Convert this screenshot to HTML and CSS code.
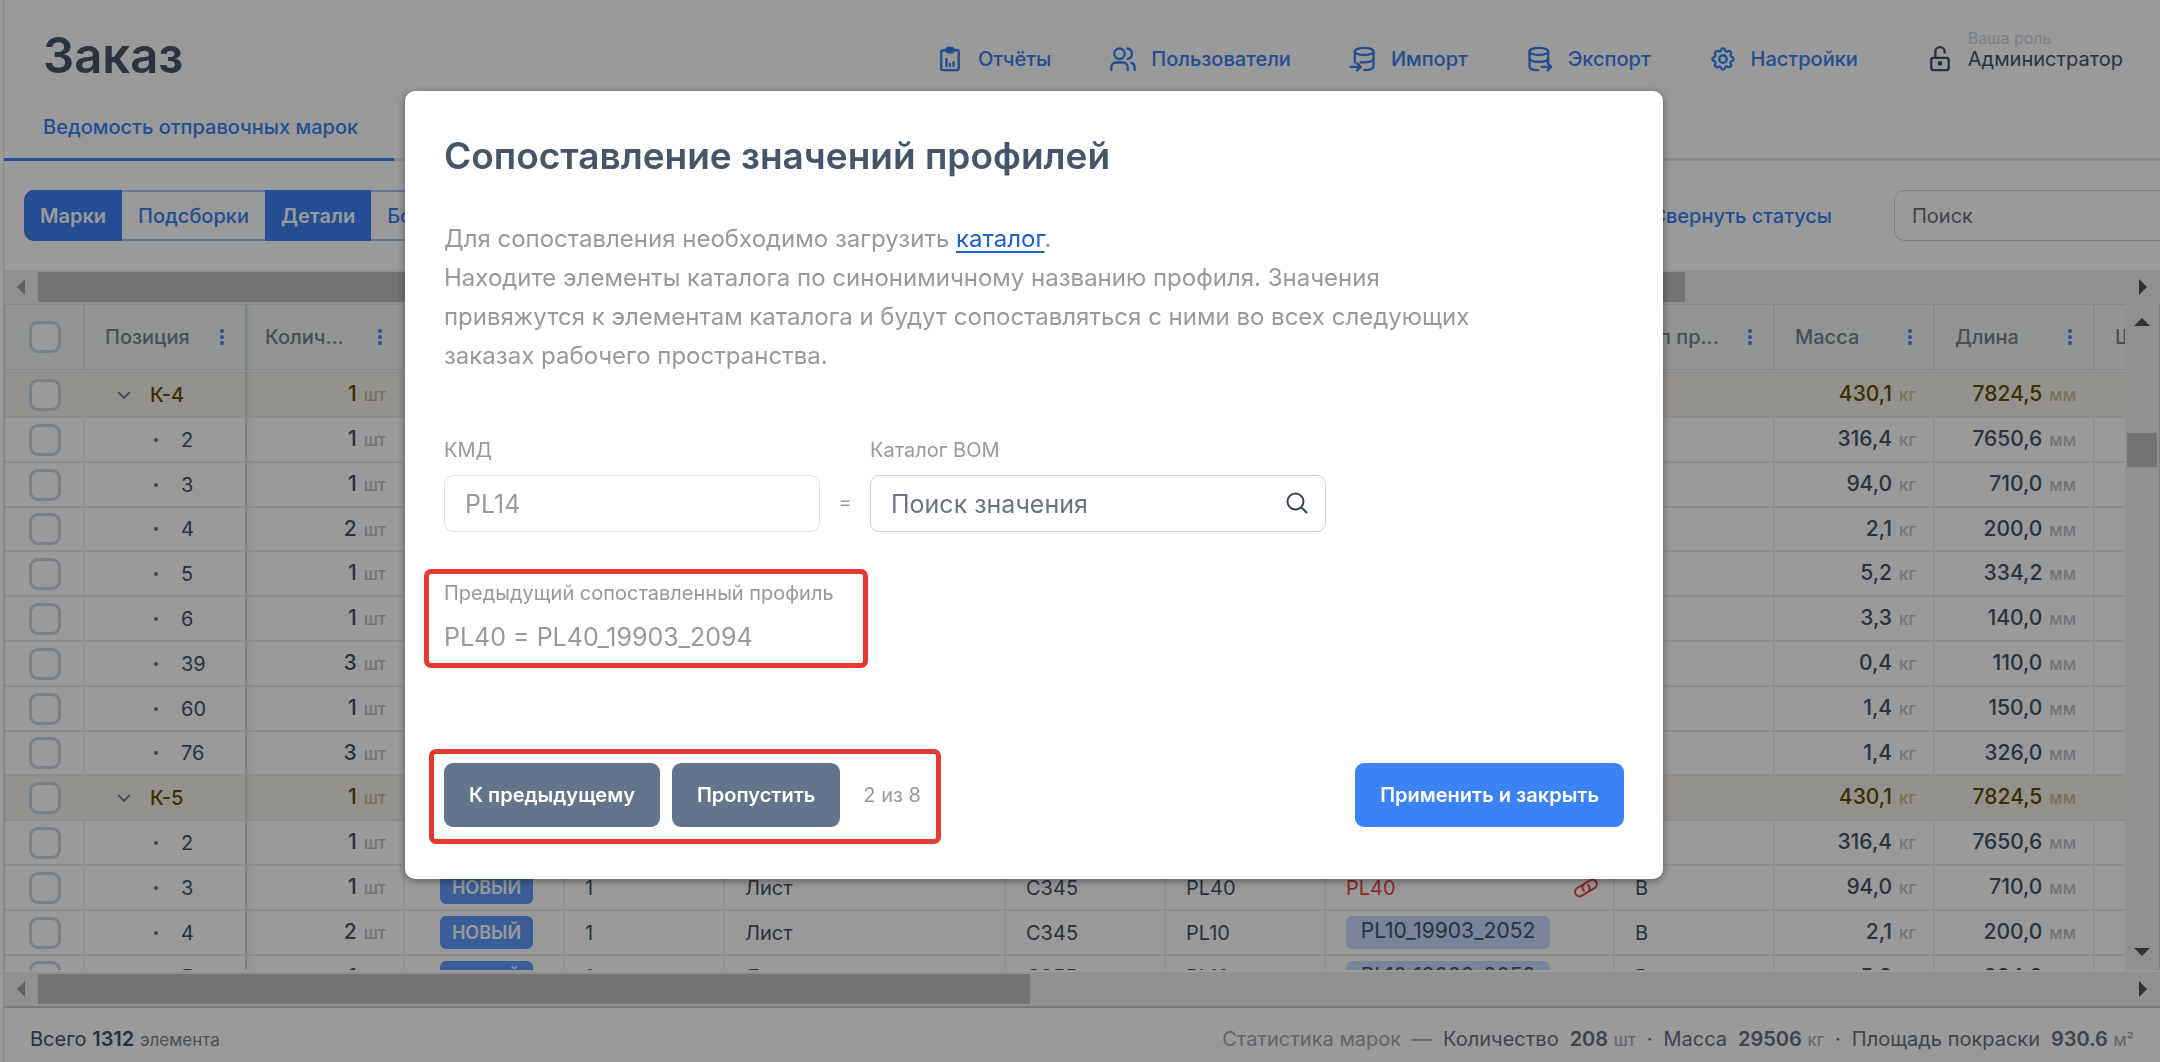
FILE: index.html
```html
<!DOCTYPE html>
<html lang="ru">
<head>
<meta charset="utf-8">
<title>Заказ</title>
<link rel="stylesheet" href="styles.css">
</head>
<body>
<svg class="sprite" aria-hidden="true">
  <symbol id="i-report" viewBox="0 0 24 24"><rect x="4.5" y="4.5" width="15" height="17" rx="1.5"/><path d="M9 4.5v-.4C9 3 9.800 2.600 10.600 2.600h2.800c.8 0 1.600.5 1.600 1.500v.6c0 1-.8 1.500-1.600 1.500h-2.800C9.800 6.200 9 5.700 9 4.700zM9 18v-6M12 18v-1.500M15 18v-3.200"/></symbol>
  <symbol id="i-users" viewBox="0 0 24 24"><circle cx="9" cy="7.500" r="4.500"/><path d="M2 21.500v-2.500a4 4 0 0 1 4-4h6a4 4 0 0 1 4 4v2.500M16 3a4.600 4.600 0 0 1 0 9M19 15.300a3.800 3.800 0 0 1 3 3.700v2.500"/></symbol>
  <symbol id="i-import" viewBox="0 0 24 24"><ellipse cx="13" cy="5.500" rx="8" ry="3.100"/><path d="M5 5.500V15M21 5.500v13c0 1.800-3.300 3-8 3M21 11.500c0 2.400-4.500 3.900-11 3.300M1.500 18.800h8M7 15.800l3 3-3 3"/></symbol>
  <symbol id="i-export" viewBox="0 0 24 24"><ellipse cx="11" cy="5.500" rx="8" ry="3.100"/><path d="M3 5.500v13c0 1.700 3 3 7.500 3M19 5.500V15M3 11c0 2.300 3.600 3.600 8 3.600s8-1.300 8-3.600M13.500 18.800h8M18.500 15.800l3 3-3 3"/></symbol>
  <symbol id="i-gear" viewBox="0 0 24 24"><circle cx="12" cy="12" r="3.200"/><path d="M10.300 4.300c.4-1.800 3-1.800 3.400 0a1.700 1.700 0 0 0 2.600 1.100c1.500-.9 3.300.8 2.400 2.400a1.700 1.700 0 0 0 1 2.500c1.800.4 1.800 3 0 3.400a1.700 1.700 0 0 0-1 2.600c.9 1.500-.9 3.300-2.400 2.400a1.700 1.700 0 0 0-2.600 1c-.4 1.800-3 1.800-3.400 0a1.700 1.700 0 0 0-2.600-1c-1.500.9-3.300-.9-2.400-2.400a1.700 1.700 0 0 0-1-2.600c-1.800-.4-1.800-3 0-3.400a1.700 1.700 0 0 0 1-2.600c-.9-1.500.9-3.300 2.400-2.400 1 .6 2.300.1 2.600-1z"/></symbol>
  <symbol id="i-lock" viewBox="0 0 24 24"><rect x="4.500" y="11" width="15" height="10.500" rx="1.800"/><path d="M8 11V6a4 4 0 0 1 8-.4V6.500"/><circle cx="12" cy="15.800" r="1"/></symbol>
  <symbol id="i-search" viewBox="0 0 24 24"><circle cx="10.500" cy="10.500" r="8"/><path d="M16.500 16.500l5 5"/></symbol>
  <symbol id="i-link" viewBox="0 0 24 24"><path transform="rotate(14 12 12)" d="M13.190 8.688a4.500 4.500 0 0 1 1.242 7.244l-4.500 4.500a4.500 4.500 0 0 1-6.364-6.364l4.400-4.400m8.050 4.700 4.400-4.400a4.500 4.500 0 0 0-6.364-6.364l-4.500 4.500a4.500 4.500 0 0 0 1.242 7.244"/></symbol>
  <symbol id="i-chevron" viewBox="0 0 24 24"><path d="M3 8l9 9 9-9"/></symbol>
  <symbol id="i-dots" viewBox="0 0 4 16"><circle cx="2" cy="2" r="2"/><circle cx="2" cy="8" r="2"/><circle cx="2" cy="14" r="2"/></symbol>
</svg>

<div class="page">
  <header class="header">
    <h1 class="header-title">Заказ</h1>
    <nav class="nav">
      <a class="nav-item" href="#"><svg class="icon"><use href="#i-report"/></svg>Отчёты</a>
      <a class="nav-item" href="#"><svg class="icon"><use href="#i-users"/></svg>Пользователи</a>
      <a class="nav-item" href="#"><svg class="icon"><use href="#i-import"/></svg>Импорт</a>
      <a class="nav-item" href="#"><svg class="icon"><use href="#i-export"/></svg>Экспорт</a>
      <a class="nav-item" href="#"><svg class="icon"><use href="#i-gear"/></svg>Настройки</a>
      <div class="nav-item role"><svg class="icon"><use href="#i-lock"/></svg><div class="role-text"><span class="role-label">Ваша роль</span><span>Администратор</span></div></div>
    </nav>
  </header>

  <nav class="tabs"><a class="tab" href="#">Ведомость отправочных марок</a></nav>

  <div class="toolbar">
    <div class="segments">
      <button class="segment segment-on" type="button">Марки</button>
      <button class="segment" type="button">Подсборки</button>
      <button class="segment segment-on" type="button">Детали</button>
      <button class="segment" type="button">Болты</button>
    </div>
    <button class="link-button" type="button">Свернуть статусы</button>
    <input class="toolbar-search" type="text" placeholder="Поиск" aria-label="Поиск">
  </div>

  <main class="grid">
    <div class="hbar">
      <span class="arrow arrow-left"></span><div class="hbar-track"><div class="thumb" style="width:78.9%"></div></div><span class="arrow arrow-right"></span>
    </div>
    <div class="grid-body">
      <div class="viewport">
        <table class="table">
          <colgroup><col class="w-check"><col class="w-pos"><col class="w-qty"><col class="w-std"><col class="w-std"><col class="w-name"><col class="w-std"><col class="w-std"><col class="w-cat"><col class="w-std"><col class="w-std"><col class="w-std"><col class="w-std"></colgroup>
          <thead>
            <tr>
              <th><input class="check" type="checkbox" aria-label="Выбрать все"></th>
              <th><div class="th">Позиция<svg class="dots"><use href="#i-dots"/></svg></div></th>
              <th><div class="th">Колич...<svg class="dots"><use href="#i-dots"/></svg></div></th>
              <th></th><th></th><th></th><th></th><th></th><th></th>
              <th><div class="th">Тип пр...<svg class="dots"><use href="#i-dots"/></svg></div></th>
              <th><div class="th">Масса<svg class="dots"><use href="#i-dots"/></svg></div></th>
              <th><div class="th">Длина<svg class="dots"><use href="#i-dots"/></svg></div></th>
              <th><div class="th">Ш</div></th>
            </tr>
          </thead>
          <tbody>
            <tr class="group"><td><input class="check" type="checkbox" aria-label="К-4"></td><td><div class="mark"><svg class="chevron"><use href="#i-chevron"/></svg>К-4</div></td><td class="num">1<small>шт</small></td><td></td><td></td><td></td><td></td><td></td><td></td><td></td><td class="num">430,1<small>кг</small></td><td class="num">7824,5<small>мм</small></td><td></td></tr>
            <tr><td><input class="check" type="checkbox" aria-label="2"></td><td><div class="part">2</div></td><td class="num">1<small>шт</small></td><td></td><td></td><td></td><td></td><td></td><td></td><td></td><td class="num">316,4<small>кг</small></td><td class="num">7650,6<small>мм</small></td><td></td></tr>
            <tr><td><input class="check" type="checkbox" aria-label="3"></td><td><div class="part">3</div></td><td class="num">1<small>шт</small></td><td></td><td></td><td></td><td></td><td></td><td></td><td></td><td class="num">94,0<small>кг</small></td><td class="num">710,0<small>мм</small></td><td></td></tr>
            <tr><td><input class="check" type="checkbox" aria-label="4"></td><td><div class="part">4</div></td><td class="num">2<small>шт</small></td><td></td><td></td><td></td><td></td><td></td><td></td><td></td><td class="num">2,1<small>кг</small></td><td class="num">200,0<small>мм</small></td><td></td></tr>
            <tr><td><input class="check" type="checkbox" aria-label="5"></td><td><div class="part">5</div></td><td class="num">1<small>шт</small></td><td></td><td></td><td></td><td></td><td></td><td></td><td></td><td class="num">5,2<small>кг</small></td><td class="num">334,2<small>мм</small></td><td></td></tr>
            <tr><td><input class="check" type="checkbox" aria-label="6"></td><td><div class="part">6</div></td><td class="num">1<small>шт</small></td><td></td><td></td><td></td><td></td><td></td><td></td><td></td><td class="num">3,3<small>кг</small></td><td class="num">140,0<small>мм</small></td><td></td></tr>
            <tr><td><input class="check" type="checkbox" aria-label="39"></td><td><div class="part">39</div></td><td class="num">3<small>шт</small></td><td></td><td></td><td></td><td></td><td></td><td></td><td></td><td class="num">0,4<small>кг</small></td><td class="num">110,0<small>мм</small></td><td></td></tr>
            <tr><td><input class="check" type="checkbox" aria-label="60"></td><td><div class="part">60</div></td><td class="num">1<small>шт</small></td><td></td><td></td><td></td><td></td><td></td><td></td><td></td><td class="num">1,4<small>кг</small></td><td class="num">150,0<small>мм</small></td><td></td></tr>
            <tr><td><input class="check" type="checkbox" aria-label="76"></td><td><div class="part">76</div></td><td class="num">3<small>шт</small></td><td></td><td></td><td></td><td></td><td></td><td></td><td></td><td class="num">1,4<small>кг</small></td><td class="num">326,0<small>мм</small></td><td></td></tr>
            <tr class="group"><td><input class="check" type="checkbox" aria-label="К-5"></td><td><div class="mark"><svg class="chevron"><use href="#i-chevron"/></svg>К-5</div></td><td class="num">1<small>шт</small></td><td></td><td></td><td></td><td></td><td></td><td></td><td></td><td class="num">430,1<small>кг</small></td><td class="num">7824,5<small>мм</small></td><td></td></tr>
            <tr><td><input class="check" type="checkbox" aria-label="2"></td><td><div class="part">2</div></td><td class="num">1<small>шт</small></td><td></td><td></td><td></td><td></td><td></td><td></td><td></td><td class="num">316,4<small>кг</small></td><td class="num">7650,6<small>мм</small></td><td></td></tr>
            <tr><td><input class="check" type="checkbox" aria-label="3"></td><td><div class="part">3</div></td><td class="num">1<small>шт</small></td><td class="status"><span class="badge">НОВЫЙ</span></td><td>1</td><td>Лист</td><td>С345</td><td>PL40</td><td><div class="missing">PL40<svg class="link-icon"><use href="#i-link"/></svg></div></td><td>B</td><td class="num">94,0<small>кг</small></td><td class="num">710,0<small>мм</small></td><td></td></tr>
            <tr><td><input class="check" type="checkbox" aria-label="4"></td><td><div class="part">4</div></td><td class="num">2<small>шт</small></td><td class="status"><span class="badge">НОВЫЙ</span></td><td>1</td><td>Лист</td><td>С345</td><td>PL10</td><td><span class="tag">PL10_19903_2052</span></td><td>B</td><td class="num">2,1<small>кг</small></td><td class="num">200,0<small>мм</small></td><td></td></tr>
            <tr><td><input class="check" type="checkbox" aria-label="5"></td><td><div class="part">5</div></td><td class="num">1<small>шт</small></td><td class="status"><span class="badge">НОВЫЙ</span></td><td>1</td><td>Лист</td><td>С355</td><td>PL10</td><td><span class="tag">PL10_19903_2052</span></td><td>B</td><td class="num">5,2<small>кг</small></td><td class="num">334,2<small>мм</small></td><td></td></tr>
          </tbody>
        </table>
      </div>
      <div class="vbar"><span class="arrow arrow-up"></span><div class="thumb thumb-side"></div><span class="arrow arrow-down"></span></div>
    </div>
    <div class="hbar">
      <span class="arrow arrow-left"></span><div class="hbar-track"><div class="thumb" style="width:47.5%"></div></div><span class="arrow arrow-right"></span>
    </div>
  </main>

  <footer class="footer">
    <div class="total">Всего <b>1312</b> <small>элемента</small></div>
    <div class="stats"><span class="stats-title">Статистика марок</span><span class="stats-title">—</span><span>Количество</span><span><b>208</b> <small>шт</small></span><span>·</span><span>Масса</span><span><b>29506</b> <small>кг</small></span><span>·</span><span>Площадь покраски</span><span><b>930.6</b> <small>м²</small></span></div>
  </footer>
</div>

<div class="overlay">
  <section class="dialog" role="dialog" aria-modal="true" aria-labelledby="dialog-title">
    <h2 class="dialog-title" id="dialog-title">Сопоставление значений профилей</h2>
    <p class="dialog-text">Для сопоставления необходимо загрузить <a href="#">каталог</a>.<br>Находите элементы каталога по синонимичному названию профиля. Значения привяжутся к элементам каталога и будут сопоставляться с ними во всех следующих заказах рабочего пространства.</p>
    <div class="match">
      <div class="field">
        <label for="kmd">КМД</label>
        <input class="input" id="kmd" type="text" value="PL14" disabled>
      </div>
      <span class="equals">=</span>
      <div class="field">
        <label for="bom">Каталог BOM</label>
        <div class="search"><input class="input" id="bom" type="text" placeholder="Поиск значения"><svg class="search-icon"><use href="#i-search"/></svg></div>
      </div>
    </div>
    <div class="previous">
      <div class="previous-label">Предыдущий сопоставленный профиль</div>
      <div class="previous-value">PL40 = PL40_19903_2094</div>
    </div>
    <div class="actions">
      <div class="steps">
        <button class="button" type="button">К предыдущему</button>
        <button class="button" type="button">Пропустить</button>
        <span class="counter">2 из 8</span>
      </div>
      <button class="button button-primary" type="button">Применить и закрыть</button>
    </div>
  </section>
</div>
</body>
</html>
```
FILE: styles.css
```css
* { box-sizing: border-box; }

body {
  margin: 0;
  background: #fff;
  color: #475569;
  font: 400 20px/28px Inter, "Noto Sans", sans-serif;
}

button, input { font: inherit; }
button { border: 0; cursor: pointer; }
a { color: #3b82f6; text-decoration: none; }
.sprite { display: none; }

.icon, .chevron, .link-icon, .search-icon {
  flex: none;
  fill: none;
  stroke: currentColor;
  stroke-width: 2;
  stroke-linecap: round;
  stroke-linejoin: round;
}

/* Page frame */
.page {
  display: flex;
  flex-direction: column;
  height: 100vh;
  margin-left: 3px;
  border-left: 1px solid #e2e8f0;
  overflow: hidden;
}

.header {
  display: flex;
  justify-content: space-between;
  height: 96px;
  padding: 16px 37px 0 39px;
}
.header-title {
  margin: 0;
  font-size: 49px;
  line-height: 80px;
  font-weight: 600;
}
.nav {
  display: flex;
  align-items: flex-end;
  gap: 58px;
  padding-bottom: 26px;
}
.nav-item {
  display: flex;
  align-items: flex-end;
  gap: 14px;
  line-height: 22px;
  font-weight: 500;
}
.icon { width: 28px; height: 28px; margin-bottom: -3px; }
.role { margin-left: 10px; font-weight: 400; }
.role-text { display: flex; flex-direction: column; }
.role-label { font-size: 16px; line-height: 20px; color: #cbd5e1; }

.tabs { display: flex; box-shadow: inset 0 -3px #e5e7eb; }
.tab {
  padding: 17px 36px 17px 39px;
  border-bottom: 3px solid #3b82f6;
  font-weight: 500;
}

.toolbar {
  display: flex;
  padding: 29px 0 29px 20px;
}
.segments {
  display: flex;
  margin-right: auto;
  border-radius: 10px;
  overflow: hidden;
}
.segment {
  height: 51px;
  padding: 0 16px;
  border: solid #a9c7fb;
  border-width: 2px 0;
  background: #fff;
  color: #3b82f6;
  font-weight: 500;
}
.segment-on {
  border-color: #3b82f6;
  background: #3b82f6;
  color: #fff;
  font-weight: 600;
}
.link-button {
  margin-right: 62px;
  padding: 0;
  background: none;
  color: #3b82f6;
  font-weight: 500;
}
.toolbar-search {
  width: 266px;
  height: 51px;
  padding: 0 17px;
  border: 1px solid #cbd5e1;
  border-right: 0;
  border-radius: 10px 0 0 10px;
  color: #475569;
}
.toolbar-search::placeholder { color: #6b7280; }

/* Scrollbars */
.hbar {
  display: flex;
  height: 34px;
  padding: 2px 0;
  background: #f1f1f1;
}
.hbar-track { flex: 1; }
.thumb { background: #c1c1c1; }
.hbar .thumb { height: 30px; }
.arrow { display: flex; align-items: center; justify-content: center; width: 34px; }
.arrow::before { content: ""; border: 8px solid transparent; }
.arrow-left::before { border-right-color: #a3a3a3; border-left-width: 0; }
.arrow-right::before { border-left-color: #505050; border-right-width: 0; }
.arrow-up::before { border-bottom-color: #505050; border-top-width: 0; }
.arrow-down::before { border-top-color: #505050; border-bottom-width: 0; }
.vbar {
  display: flex;
  flex-direction: column;
  width: 35px;
  padding: 0 2px;
  border-right: 1px solid #cbd5e1;
  background: #f1f1f1;
}
.vbar .arrow { width: auto; height: 36px; }
.vbar .arrow-down { margin-top: auto; }
.thumb-side { height: 34px; margin-top: 93px; }

/* Data grid */
.grid {
  display: flex;
  flex: 1;
  flex-direction: column;
  min-height: 0;
  border-bottom: 2px solid #cbcbcb;
}
.grid-body {
  display: flex;
  flex: 1;
  min-height: 0;
  margin-bottom: 2px;
  border-left: 1px solid #cbd5e1;
}
.viewport { flex: 1; overflow: hidden; }
.table {
  width: 2250px;
  table-layout: fixed;
  border-spacing: 0;
}
.w-check { width: 80px; }
.w-pos { width: 162px; }
.w-qty { width: 158px; }
.w-std { width: 160px; }
.w-name { width: 281px; }
.w-cat { width: 289px; }

th, td {
  padding: 0 20px;
  border-right: 2px solid #eef1f4;
  border-bottom: 2px solid #e6eaee;
  text-align: left;
  white-space: nowrap;
}
th {
  height: 69px;
  padding: 0 17px 0 20px;
  border-top: 1px solid #dbe1ea;
  border-right-color: #e3e8ec;
  border-bottom: 4px double #dde2e8;
  background: #f2f7f5;
  color: #7d8590;
  font-weight: 500;
}
td { height: 45px; }
tr:nth-child(5n+4) td { height: 44px; }
th:first-child, td:first-child { padding: 0 0 0 24px; }
th:nth-child(2), td:nth-child(2) { border-right-color: #d0d5da; }
td:nth-child(3), th:nth-child(3) {
  padding-left: 18px;
  background-image: linear-gradient(90deg, rgba(71, 85, 105, .08), transparent 6px);
}
.th { display: flex; align-items: center; justify-content: space-between; margin-right: 4px; }
.dots { width: 4px; height: 16px; fill: #3b82f6; }

.check {
  display: block;
  appearance: none;
  width: 32px;
  height: 32px;
  margin: 0;
  border: 3px solid #cbd5e1;
  border-radius: 9px;
  background: #fff;
}
.mark {
  display: flex;
  align-items: center;
  gap: 19px;
  padding-left: 12px;
  font-weight: 500;
}
.chevron { width: 14px; height: 14px; color: #64748b; stroke-width: 3; }
.part {
  display: flex;
  align-items: center;
  gap: 23px;
  padding-left: 49px;
}
.part::before { content: ""; width: 4px; height: 4px; border-radius: 2px; background: #64748b; }
.num { padding-right: 17px; text-align: right; font-size: 21px; font-weight: 500; }
.num small { margin-left: 7px; color: #bfc3c9; font-size: 17px; }
.group td { background-color: #f6f2ed; color: #664d00; }
.group .num small { color: #c8bc98; }

td.status { padding-left: 35px; }
.badge {
  display: block;
  width: 93px;
  height: 33px;
  border-radius: 6px;
  background: #619bff;
  color: #fff;
  font-size: 18px;
  line-height: 33px;
  font-weight: 600;
  text-align: center;
}
.missing { display: flex; align-items: center; justify-content: space-between; color: #ef4444; }
.link-icon { width: 24px; height: 24px; margin-right: -5px; }
.tag {
  display: block;
  width: 204px;
  height: 33px;
  border-radius: 6px;
  background: #cbdcfd;
  font-size: 21px;
  line-height: 30px;
  text-align: center;
}

.footer {
  display: flex;
  justify-content: space-between;
  padding: 17px 26px 8px 26px;
}
.footer small { font-size: 17px; }
.total b { font-weight: 600; }
.total small { color: #7d8590; }
.stats { display: flex; gap: 11px; color: #6b7280; }
.stats b { font-weight: 600; }
.stats small { color: #a3a9b3; }
.stats-title { color: #a3a9b3; }

/* Dialog */
.overlay {
  position: fixed;
  inset: 0;
  padding: 91px 497px 0 405px;
  background: rgba(0, 0, 0, .4);
}
.dialog {
  padding: 39px 39px 35px;
  border-radius: 10px;
  background: #fff;
  box-shadow: 0 2px 8px rgba(0, 0, 0, .4);
}
.dialog-title {
  margin: 0 0 37px;
  font-size: 37px;
  line-height: 52px;
  font-weight: 600;
}
.dialog-text {
  max-width: 1060px;
  margin: 0 0 61px;
  color: #999;
  font-size: 24px;
  line-height: 39px;
}
.dialog-text a { color: #1d5fcc; text-decoration: underline; text-decoration-thickness: 2px; text-underline-offset: 4px; }

.match { display: flex; align-items: flex-end; }
.field { display: flex; flex-direction: column; gap: 11px; width: 376px; color: #999; }
.match .field:last-child { width: 456px; }
.equals { width: 50px; line-height: 60px; text-align: center; color: #999; }
.input {
  width: 100%;
  height: 57px;
  padding: 0 20px;
  border: 1px solid #cbd0db;
  border-radius: 9px;
  background: #fff;
  color: #475569;
  font-size: 25px;
}
.input::placeholder { color: #6b7280; }
.input:disabled { border-color: #e2e2e6; color: #999; }
.search { position: relative; }
.search-icon {
  position: absolute;
  top: 16px;
  right: 17px;
  width: 24px;
  height: 24px;
  color: #374151;
}

.previous {
  width: 444px;
  margin: 37px 0 0 -20px;
  padding: 5px 15px 7px;
  border: 5px solid #e53a30;
  border-radius: 7px;
  color: #999;
}
.previous-label { margin-bottom: 11px; }
.previous-value { font-size: 25px; line-height: 38px; }

.actions {
  display: flex;
  align-items: flex-start;
  justify-content: space-between;
  margin-top: 81px;
}
.steps {
  display: flex;
  gap: 12px;
  margin-left: -15px;
  padding: 9px 15px 12px 10px;
  border: 5px solid #e53a30;
  border-radius: 7px;
}
.counter { margin-left: 11px; line-height: 64px; color: #999; }
.button {
  height: 64px;
  padding: 0 25px;
  border-radius: 9px;
  background: #64748b;
  color: #fff;
  font-weight: 600;
}
.button-primary { margin-top: 14px; background: #3b82f6; }
```
